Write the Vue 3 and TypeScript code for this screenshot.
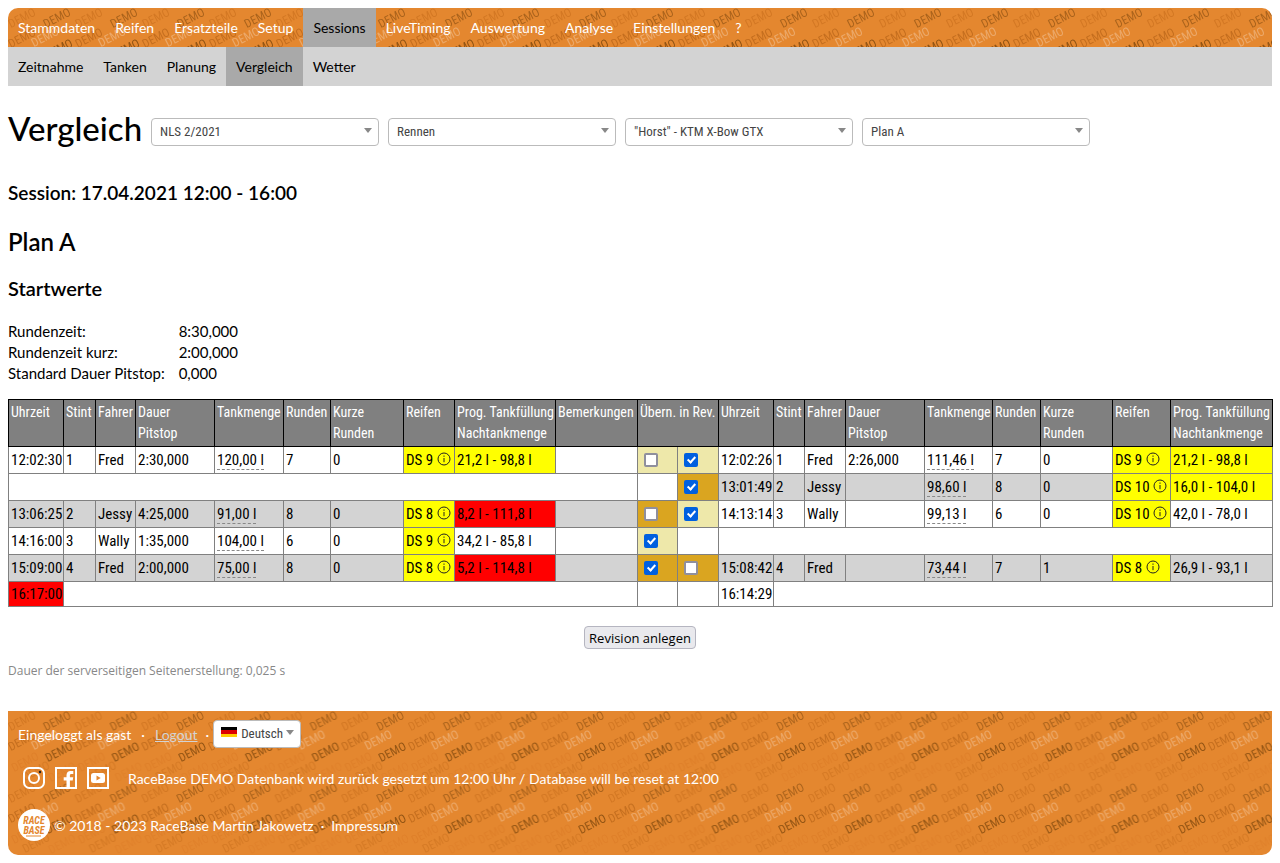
<script setup lang="ts">
import { ref } from 'vue'

interface Stamp { x: number; y: number; fill: string; opacity: number }
interface Stint {
  time: string
  stint: string
  driver: string
  pit: string
  fuel: string
  laps: string
  short: string
  tyre: string
  forecast: string
  forecastTone?: string
}
interface Choice { checked: boolean; tone: string }
interface Row {
  left: Stint | null
  leftEnd?: string
  right: Stint | null
  rightEnd?: string
  take: Choice | null
  rev: Choice | null
  leftShade?: boolean
  rightShade?: boolean
}

const mainNav = ['Stammdaten', 'Reifen', 'Ersatzteile', 'Setup', 'Sessions', 'LiveTiming', 'Auswertung', 'Analyse', 'Einstellungen', '?']
const subNav = ['Zeitnahme', 'Tanken', 'Planung', 'Vergleich', 'Wetter']

const filters = [
  { id: 'event', label: 'Veranstaltung', value: 'NLS 2/2021' },
  { id: 'session', label: 'Session', value: 'Rennen' },
  { id: 'car', label: 'Fahrzeug', value: '"Horst" - KTM X-Bow GTX' },
  { id: 'plan', label: 'Plan', value: 'Plan A' },
]

const startValues = [
  ['Rundenzeit:', '8:30,000'],
  ['Rundenzeit kurz:', '2:00,000'],
  ['Standard Dauer Pitstop:', '0,000'],
]

const stamps: Stamp[] = [
  { x: 49, y: 10, fill: '#5a3000', opacity: 0.42 },
  { x: 14, y: 10, fill: '#a04800', opacity: 0.25 },
  { x: 14, y: 30, fill: '#8a4000', opacity: 0.36 },
  { x: 37, y: 29, fill: '#ffffff', opacity: 0.28 },
  { x: 51, y: 41, fill: '#5a3000', opacity: 0.6 },
  { x: 17, y: 51, fill: '#c86010', opacity: 0.2 },
  { x: 28, y: 60, fill: '#a04800', opacity: 0.22 },
  { x: 54, y: 61, fill: '#c86010', opacity: 0.15 },
]
const wraps = [-67, 0, 67]

const colWidths = [55, 32, 40, 79, 69, 47, 73, 51, 101, 82, 40, 41, 55, 31, 41, 79, 68, 48, 72, 58, 102]
const headings = ['Uhrzeit', 'Stint', 'Fahrer', 'Dauer\nPitstop', 'Tankmenge', 'Runden', 'Kurze\nRunden', 'Reifen', 'Prog. Tankfüllung\nNachtankmenge']

const s = (time: string, stint: string, driver: string, pit: string, fuel: string, laps: string, short: string, tyre: string, forecast: string, forecastTone = ''): Stint =>
  ({ time, stint, driver, pit, fuel, laps, short, tyre, forecast, forecastTone })

const rows = ref<Row[]>([
  {
    left: s('12:02:30', '1', 'Fred', '2:30,000', '120,00 l', '7', '0', 'DS 9', '21,2 l - 98,8 l', 'yellow'),
    right: s('12:02:26', '1', 'Fred', '2:26,000', '111,46 l', '7', '0', 'DS 9', '21,2 l - 98,8 l', 'yellow'),
    take: { checked: false, tone: 'pale' }, rev: { checked: true, tone: 'pale' },
  },
  {
    left: null,
    right: s('13:01:49', '2', 'Jessy', '', '98,60 l', '8', '0', 'DS 10', '16,0 l - 104,0 l', 'yellow'),
    take: null, rev: { checked: true, tone: 'gold' }, rightShade: true,
  },
  {
    left: s('13:06:25', '2', 'Jessy', '4:25,000', '91,00 l', '8', '0', 'DS 8', '8,2 l - 111,8 l', 'red'),
    right: s('14:13:14', '3', 'Wally', '', '99,13 l', '6', '0', 'DS 10', '42,0 l - 78,0 l'),
    take: { checked: false, tone: 'gold' }, rev: { checked: true, tone: 'pale' }, leftShade: true,
  },
  {
    left: s('14:16:00', '3', 'Wally', '1:35,000', '104,00 l', '6', '0', 'DS 9', '34,2 l - 85,8 l'),
    right: null,
    take: { checked: true, tone: 'pale' }, rev: null,
  },
  {
    left: s('15:09:00', '4', 'Fred', '2:00,000', '75,00 l', '8', '0', 'DS 8', '5,2 l - 114,8 l', 'red'),
    right: s('15:08:42', '4', 'Fred', '', '73,44 l', '7', '1', 'DS 8', '26,9 l - 93,1 l'),
    take: { checked: true, tone: 'gold' }, rev: { checked: false, tone: 'gold' }, leftShade: true, rightShade: true,
  },
  { left: null, leftEnd: '16:17:00', right: null, rightEnd: '16:14:29', take: null, rev: null },
])
</script>

<template>
  <div class="page">
    <header>
      <nav class="main-nav" aria-label="Hauptmenü">
        <svg class="stamps" aria-hidden="true">
          <defs>
            <pattern id="stamps-head" width="67" height="72" patternUnits="userSpaceOnUse">
              <template v-for="(p, i) in stamps" :key="i">
                <text v-for="w in wraps" :key="w" class="stamp" text-anchor="middle" :fill="p.fill" :fill-opacity="p.opacity" :transform="`translate(${p.x + w} ${p.y}) rotate(-27)`" y="4">DEMO</text>
              </template>
            </pattern>
          </defs>
          <rect width="100%" height="100%" fill="url(#stamps-head)" />
        </svg>
        <a v-for="item in mainNav" :key="item" href="#" :class="{ active: item === 'Sessions' }">{{ item }}</a>
      </nav>
      <nav class="sub-nav" aria-label="Untermenü">
        <a v-for="item in subNav" :key="item" href="#" :class="{ active: item === 'Vergleich' }">{{ item }}</a>
      </nav>
    </header>

    <main>
      <div class="title-row">
        <h1>Vergleich</h1>
        <span v-for="f in filters" :key="f.id" class="picker">
          <select :id="f.id" :aria-label="f.label"><option>{{ f.value }}</option></select>
        </span>
      </div>

      <h3 class="session">Session: 17.04.2021 12:00 - 16:00</h3>
      <h2>Plan A</h2>
      <h3>Startwerte</h3>

      <table class="start">
        <tbody>
          <tr v-for="v in startValues" :key="v[0]"><th scope="row">{{ v[0] }}</th><td>{{ v[1] }}</td></tr>
        </tbody>
      </table>

      <table class="plan">
        <colgroup><col v-for="(w, i) in colWidths" :key="i" :style="{ width: w + 'px' }" /></colgroup>
        <thead>
          <tr>
            <th v-for="h in headings" :key="'l' + h" scope="col">{{ h }}</th>
            <th scope="col">Bemerkungen</th>
            <th scope="col" colspan="2">Übern. in Rev.</th>
            <th v-for="h in headings" :key="'r' + h" scope="col">{{ h }}</th>
          </tr>
        </thead>
        <tbody>
          <tr v-for="(r, i) in rows" :key="i">
            <template v-if="r.left">
              <td :class="{ shade: r.leftShade }">{{ r.left.time }}</td>
              <td :class="{ shade: r.leftShade }">{{ r.left.stint }}</td>
              <td :class="{ shade: r.leftShade }">{{ r.left.driver }}</td>
              <td :class="{ shade: r.leftShade }">{{ r.left.pit }}</td>
              <td :class="{ shade: r.leftShade }"><span class="hint">{{ r.left.fuel }}</span></td>
              <td :class="{ shade: r.leftShade }">{{ r.left.laps }}</td>
              <td :class="{ shade: r.leftShade }">{{ r.left.short }}</td>
              <td class="yellow">{{ r.left.tyre }}
                <svg class="info" viewBox="0 0 14 14" aria-hidden="true"><circle cx="7" cy="7" r="6" /><path d="M7 6v4.200M7 3.500v1.300" /></svg>
              </td>
              <td :class="[r.left.forecastTone, { shade: r.leftShade && !r.left.forecastTone }]">{{ r.left.forecast }}</td>
              <td :class="{ shade: r.leftShade }"></td>
            </template>
            <template v-else-if="r.leftEnd">
              <td class="red">{{ r.leftEnd }}</td>
              <td colspan="9"></td>
            </template>
            <td v-else colspan="10"></td>

            <td :class="r.take?.tone"><input v-if="r.take" v-model="r.take.checked" type="checkbox" :aria-label="`Plan, Zeile ${i + 1} übernehmen`" /></td>
            <td :class="r.rev?.tone"><input v-if="r.rev" v-model="r.rev.checked" type="checkbox" :aria-label="`Session, Zeile ${i + 1} übernehmen`" /></td>

            <template v-if="r.right">
              <td :class="{ shade: r.rightShade }">{{ r.right.time }}</td>
              <td :class="{ shade: r.rightShade }">{{ r.right.stint }}</td>
              <td :class="{ shade: r.rightShade }">{{ r.right.driver }}</td>
              <td :class="{ shade: r.rightShade }">{{ r.right.pit }}</td>
              <td :class="{ shade: r.rightShade }"><span class="hint">{{ r.right.fuel }}</span></td>
              <td :class="{ shade: r.rightShade }">{{ r.right.laps }}</td>
              <td :class="{ shade: r.rightShade }">{{ r.right.short }}</td>
              <td class="yellow">{{ r.right.tyre }}
                <svg class="info" viewBox="0 0 14 14" aria-hidden="true"><circle cx="7" cy="7" r="6" /><path d="M7 6v4.200M7 3.500v1.300" /></svg>
              </td>
              <td :class="[r.right.forecastTone, { shade: r.rightShade && !r.right.forecastTone }]">{{ r.right.forecast }}</td>
            </template>
            <template v-else-if="r.rightEnd">
              <td>{{ r.rightEnd }}</td>
              <td colspan="8"></td>
            </template>
            <td v-else colspan="9"></td>
          </tr>
        </tbody>
      </table>

      <div class="actions"><button type="button">Revision anlegen</button></div>
      <p class="timing">Dauer der serverseitigen Seitenerstellung: 0,025 s</p>
    </main>

    <footer>
      <svg class="stamps" aria-hidden="true">
        <defs>
          <pattern id="stamps-foot" :width="200 / 3" height="72" patternUnits="userSpaceOnUse">
            <template v-for="(p, i) in stamps" :key="i">
              <text v-for="w in wraps" :key="w" class="stamp" text-anchor="middle" :fill="p.fill" :fill-opacity="p.opacity" :transform="`translate(${p.x + w} ${p.y}) rotate(-27)`" y="4">DEMO</text>
            </template>
          </pattern>
        </defs>
        <rect width="100%" height="100%" fill="url(#stamps-foot)" />
      </svg>
      <div class="foot-row account">
        <span>Eingeloggt als gast</span><span class="dot">·</span><a class="logout" href="#">Logout</a><span class="dot last">·</span>
        <span class="picker language">
          <svg class="flag" viewBox="0 0 16 10" aria-hidden="true"><path fill="#000" d="M0 0h16v4H0z" /><path fill="#d00" d="M0 3h16v4H0z" /><path fill="#fc0" d="M0 7h16v3H0z" /></svg>
          <select id="language" aria-label="Sprache"><option>Deutsch</option></select>
        </span>
      </div>
      <div class="foot-row social">
        <a href="#" aria-label="Instagram">
          <svg viewBox="0 0 22 22" aria-hidden="true"><rect x="1" y="1" width="20" height="20" rx="5.500" fill="none" stroke="#fff" stroke-width="2" /><circle cx="11" cy="11" r="5" fill="none" stroke="#fff" stroke-width="2" /><circle cx="17" cy="5" r="1.200" fill="#222" /></svg>
        </a>
        <a href="#" aria-label="Facebook">
          <svg viewBox="0 0 22 22" aria-hidden="true"><rect x="1" y="1" width="20" height="20" fill="none" stroke="#fff" stroke-width="2" /><path fill="#fff" d="M11.500 21v-7.500H8.700v-3.200h2.800V8.200c0-2.800 1.600-4.300 4.200-4.300h2.600v3h-1.800c-1.300 0-1.600.6-1.600 1.600v1.800h3.300l-.5 3.200h-2.800V21z" /></svg>
        </a>
        <a href="#" aria-label="YouTube">
          <svg viewBox="0 0 22 22" aria-hidden="true"><rect x="1" y="1" width="20" height="20" fill="none" stroke="#fff" stroke-width="2" /><rect x="4" y="6" width="14" height="10" rx="2.500" fill="#fff" /><path fill="#e4872f" d="M9.500 8.500v5l4.200-2.500z" /></svg>
        </a>
        <span class="notice">RaceBase DEMO Datenbank wird zurück gesetzt um 12:00 Uhr / Database will be reset at 12:00</span>
      </div>
      <div class="foot-row">
        <svg class="logo" viewBox="0 0 32 32" role="img" aria-label="RaceBase">
          <circle cx="16" cy="16" r="16" fill="#fff" />
          <text class="logo-text" x="16" y="15" text-anchor="middle">RACE</text>
          <text class="logo-text" x="16" y="25" text-anchor="middle">BASE</text>
          <path d="M8 27h15" stroke="#e4872f" />
        </svg>
        <span class="copy">© 2018 - 2023 RaceBase Martin Jakowetz</span><span class="dot">·</span><a href="#">Impressum</a>
      </div>
    </footer>
  </div>
</template>

<style>
body {
  margin: 0;
  background: #fff;
}
</style>

<style scoped>
.page {
  padding: 8px;
  color: #000;
  font-family: Lato, "Noto Sans", sans-serif;
  font-size: 15px;
  line-height: 21px;
}
a {
  color: inherit;
  text-decoration: none;
}
.main-nav,
.sub-nav {
  display: flex;
  position: relative;
  font-size: 14px;
}
.main-nav {
  overflow: hidden;
  border-radius: 10px 10px 0 0;
  background: #e4872f;
  color: #fff;
}
.sub-nav {
  background: #d3d3d3;
}
.main-nav a,
.sub-nav a {
  position: relative;
  padding: 9px 10px;
}
.main-nav a.active,
.sub-nav a.active {
  background: #a9a9a9;
  color: #000;
}
.stamps {
  position: absolute;
  inset: 0;
  width: 100%;
  height: 100%;
}
.stamp {
  font-family: "Roboto Condensed", Roboto, sans-serif;
  font-size: 12px;
}
.title-row {
  display: flex;
  align-items: center;
  gap: 9px;
  margin-top: 22px;
}
h1,
h2,
h3 {
  margin: 0;
  font-weight: 500;
}
h1 {
  font-size: 33px;
  line-height: 40px;
}
h2 {
  margin-top: 21px;
  font-size: 24px;
  font-weight: 600;
  line-height: 32px;
}
h3 {
  margin-top: 18px;
  font-size: 20px;
  font-weight: 600;
  line-height: 24px;
}
h3.session {
  margin-top: 33px;
  font-size: 19px;
}
.picker {
  display: flex;
  position: relative;
  flex: 0 1 228px;
}
.picker::after {
  content: "";
  position: absolute;
  top: 10px;
  right: 7px;
  border: 4px solid transparent;
  border-top: 5px solid #888;
  border-bottom: 0;
  pointer-events: none;
}
select {
  appearance: none;
  width: 100%;
  height: 28px;
  margin: 0;
  padding: 0 20px 2px 8px;
  border: 1px solid #bbb;
  border-radius: 4px;
  background: #fff;
  color: #444;
  font-family: "Roboto Condensed", Roboto, sans-serif;
  font-size: 13px;
}
.title-row select {
  margin-top: 8px;
}
.title-row .picker::after {
  top: 18px;
}
.start {
  margin-top: 21px;
  border-collapse: collapse;
}
.start th,
.start td {
  padding: 0 14px 0 0;
  font-weight: 400;
  text-align: left;
}
.plan {
  width: 100%;
  margin-top: 15px;
  border-collapse: collapse;
  table-layout: fixed;
  font-family: "Roboto Condensed", Roboto, sans-serif;
  font-size: 15px;
}
.plan th,
.plan td {
  padding: 2px;
  border: 1px solid #808080;
  text-align: left;
  white-space: nowrap;
}
.plan td {
  height: 22px;
  line-height: 20px;
}
.plan tbody tr:last-child td {
  height: 20px;
}
.plan th {
  border-color: #000;
  background: #808080;
  color: #fff;
  font-size: 14px;
  font-weight: 400;
  vertical-align: top;
  white-space: pre;
}
.plan .shade {
  background: #d3d3d3;
}
.plan .yellow {
  background: #ff0;
}
.plan .red {
  background: #f00;
}
.plan .pale {
  background: #eee8aa;
}
.plan .gold {
  background: #daa520;
}
.hint {
  border-bottom: 1px dashed #888;
}
.info {
  width: 14px;
  height: 14px;
  vertical-align: -1px;
  fill: none;
  stroke: #222;
}
input[type="checkbox"] {
  appearance: none;
  display: block;
  position: relative;
  width: 14px;
  height: 14px;
  margin: 0 4px;
  border: 2px solid #8f8f9d;
  border-radius: 2px;
  background: #fff;
}
input[type="checkbox"]:checked {
  border-color: #0060df;
  background: #0060df;
}
input[type="checkbox"]:checked::before {
  content: "";
  position: absolute;
  top: 0;
  left: 3px;
  width: 3px;
  height: 6px;
  border: solid #fff;
  border-width: 0 2px 2px 0;
  transform: rotate(42deg);
}
.actions {
  display: flex;
  justify-content: center;
  margin-top: 19px;
}
button {
  height: 23px;
  padding: 0 4px;
  border: 1px solid #b5b5c0;
  border-radius: 4px;
  background: #e9e9ed;
  color: #000;
  font-family: "Open Sans", sans-serif;
  font-size: 13px;
}
.timing {
  margin: 11px 0 0;
  color: #888;
  font-family: "Open Sans", sans-serif;
  font-size: 12px;
}
footer {
  position: relative;
  overflow: hidden;
  margin-top: 30px;
  padding: 9px 10px 14px;
  border-radius: 0 0 10px 10px;
  background: #e4872f;
  color: #fff;
  font-size: 14px;
}
.foot-row {
  display: flex;
  position: relative;
  align-items: center;
}
.dot {
  margin: 0 7px;
}
.account .dot {
  margin: 0 10px;
}
.account .dot.last {
  margin: 0 4px 0 8px;
}
.logout {
  color: #d3d3d3;
  text-decoration: underline;
}
.language {
  flex-basis: 88px;
}
.flag {
  position: absolute;
  top: 7px;
  left: 8px;
  width: 16px;
  height: 10px;
}
.language select {
  padding-right: 12px;
  padding-left: 27px;
}
.social {
  gap: 10px;
  margin-top: 19px;
  padding-left: 5px;
}
.social svg {
  display: block;
  width: 22px;
  height: 22px;
}
.notice {
  margin-left: 9px;
}
.logo {
  width: 32px;
  height: 32px;
}
.social + .foot-row {
  margin-top: 20px;
}
.logo-text {
  fill: #e4872f;
  font: italic 700 10px "Roboto Condensed", Roboto, sans-serif;
}
.copy {
  margin-left: 4px;
}
</style>
